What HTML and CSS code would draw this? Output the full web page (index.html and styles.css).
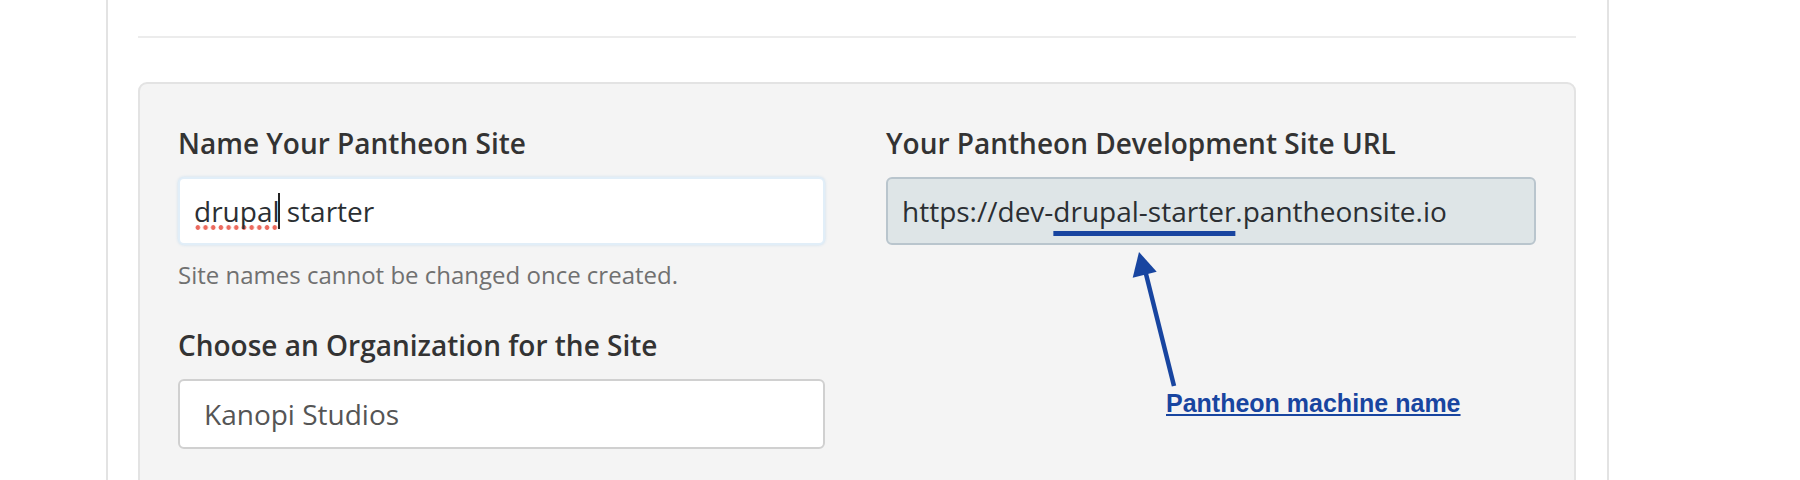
FILE: index.html
```html
<!DOCTYPE html>
<html lang="en">
<head>
<meta charset="utf-8">
<title>Create Site</title>
<link rel="stylesheet" href="styles.css">
</head>
<body>
<div class="page">
  <div class="frame">
    <hr class="divider">
    <section class="panel">
      <div class="col">
        <div class="label">Name Your Pantheon Site</div>
        <div class="field field--focus"><span class="spell">drupal</span><span class="caret"></span> starter</div>
        <p class="help">Site names cannot be changed once created.</p>
        <div class="label label--org">Choose an Organization for the Site</div>
        <div class="field field--select">Kanopi Studios</div>
      </div>
      <div class="col col--url">
        <div class="label">Your Pantheon Development Site URL</div>
        <div class="field field--readonly">https://dev-<span class="mark">drupal-starter</span>.pantheonsite.io</div>
        <svg class="arrow" width="56" height="150" viewBox="0 0 56 150" aria-hidden="true">
          <line x1="18.5" y1="28" x2="47" y2="142" stroke="#1845a0" stroke-width="4.5"/>
          <polygon points="12,8 5.7,33.7 29.7,27.7" fill="#1845a0"/>
        </svg>
        <a class="note" href="#">Pantheon machine name</a>
      </div>
    </section>
  </div>
</div>
</body>
</html>
```

FILE: styles.css
```css
* { box-sizing: border-box; }

html, body {
  margin: 0;
  padding: 0;
  background: #ffffff;
}

body {
  font-family: "Open Sans", "Noto Sans", sans-serif;
  color: #333333;
}

.page {
  display: flex;
  height: 480px;
  overflow: hidden;
}

.frame {
  margin-left: 106px;
  width: 1503px;
  border-left: 2px solid #e3e3e3;
  border-right: 2px solid #e3e3e3;
  padding: 36px 31px 0 30px;
}

.divider {
  margin: 0 0 44px;
  border: 0;
  height: 2px;
  background: #ececec;
}

.panel {
  display: grid;
  grid-template-columns: 647fr 650fr;
  column-gap: 61px;
  background: #f4f4f4;
  border: 2px solid #e3e3e3;
  border-radius: 9px;
  padding: 40px 38px 80px 38px;
}

.col {
  display: flex;
  flex-direction: column;
  min-width: 0;
}

.col--url {
  position: relative;
}

.label {
  font-size: 28px;
  line-height: 38px;
  font-weight: 600;
  color: #333333;
  margin-bottom: 15px;
  white-space: nowrap;
}

.label--org {
  margin-top: 34px;
  margin-bottom: 15px;
}

.field {
  display: flex;
  align-items: center;
  height: 68px;
  border: 2px solid #d0d0d0;
  border-radius: 6px;
  background: #ffffff;
  padding: 0 13px;
  font-size: 28px;
  line-height: 38px;
  color: #2b2f33;
  white-space: pre;
}

.field--focus {
  border-color: #e1eef8;
  box-shadow: 0 0 3px rgba(150, 200, 235, 0.45);
  padding-left: 14px;
}

.field--readonly {
  background: #dee5e7;
  border-color: #b9c5cd;
  padding-left: 14px;
}

.field--select {
  height: 70px;
  padding-left: 24px;
  color: #555555;
}

.spell {
  background-image: radial-gradient(circle at center, #ec6a5e 0, #ec6a5e 2px, rgba(236, 106, 94, 0) 2.7px);
  background-size: 7.7px 5px;
  background-repeat: repeat-x;
  background-position: 0 100%;
}

.caret {
  position: relative;
  display: inline-block;
  width: 0;
  height: 38px;
}

.caret::after {
  content: "";
  position: absolute;
  left: -2px;
  top: 1px;
  width: 2px;
  height: 36px;
  background: #222222;
}

.mark {
  text-decoration: underline;
  text-decoration-color: #1845a0;
  text-decoration-thickness: 5px;
  text-underline-offset: 9px;
  text-decoration-skip-ink: none;
}

.help {
  margin: 13px 0 0;
  font-size: 24px;
  line-height: 34px;
  color: #707070;
}

.arrow {
  position: absolute;
  left: 241px;
  top: 120px;
}

.note {
  position: absolute;
  left: 280px;
  top: 267px;
  font-family: "Liberation Sans", Arial, sans-serif;
  font-weight: 700;
  font-size: 25px;
  line-height: 25px;
  color: #1845a0;
  text-decoration: underline;
  text-decoration-thickness: 2px;
  text-underline-offset: 2px;
  white-space: nowrap;
}
```
